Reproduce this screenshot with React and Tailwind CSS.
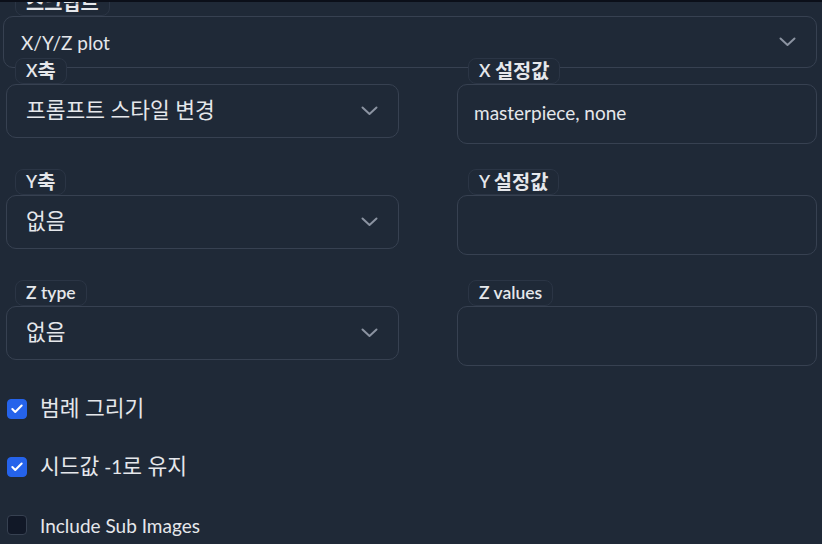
import { Check } from 'lucide-react'

const font = { fontFamily: 'Lato, "Noto Sans CJK KR", sans-serif' }

// 한글은 참고 화면에서 라틴 글자보다 크게 찍혀 있어서 따로 키움
function K({ children }) {
  return <span className="text-[1.13em]">{children}</span>
}

function Chevron() {
  return (
    <svg width="17" height="10" viewBox="0 0 17 10" fill="none" className="shrink-0">
      <polyline points="1.5,1.5 8.5,8 15.5,1.5" stroke="#8b93a1" strokeWidth="2" strokeLinecap="round" strokeLinejoin="round" />
    </svg>
  )
}

function Label({ children, className = '' }) {
  return (
    <div className={`relative z-10 self-start h-[26px] px-[10px] flex items-center rounded-lg bg-[#1f2937] border border-[#2b3545] text-[17.5px] font-semibold text-[#e5e7eb] leading-none whitespace-pre ${className}`}>
      {children}
    </div>
  )
}

function Dropdown({ label, value }) {
  return (
    <div className="flex flex-col">
      <Label className="ml-[9px]">{label}</Label>
      <div className="h-[54px] flex items-center justify-between pl-[19px] pr-[20px] rounded-[10px] border border-[#374151] text-[19px] leading-none text-[#e5e7eb]">
        <span>{value}</span>
        <Chevron />
      </div>
    </div>
  )
}

function TextBox({ label, value }) {
  return (
    <div className="flex flex-col">
      <Label className="ml-[11px]">{label}</Label>
      <div className="h-[60px] flex items-center px-[16px] pb-[3px] rounded-[10px] border border-[#374151] text-[19px] leading-none text-[#e5e7eb]">
        {value}
      </div>
    </div>
  )
}

function CheckRow({ checked, children }) {
  return (
    <div className="flex items-center gap-[13px] h-[20px]">
      <div
        className={`ml-[7px] w-[20px] h-[20px] rounded-[4px] flex items-center justify-center ${
          checked ? 'bg-[#2563eb] border border-[#2563eb]' : 'bg-[#111827] border border-[#374151]'
        }`}
      >
        {checked && <Check className="w-[14px] h-[14px] text-white" strokeWidth={3.5} />}
      </div>
      <span className="text-[19px] leading-none text-[#e5e7eb] whitespace-pre">{children}</span>
    </div>
  )
}

export default function App() {
  return (
    <div className="w-[822px] h-[544px] overflow-hidden bg-[#1f2937] border-t-2 border-[#0b0f19]" style={font}>
      {/* 스크립트 */}
      <div className="flex flex-col ml-[3px] w-[814px]">
        <Label className="ml-[12px] -mt-[12px]"><K>스크립트</K></Label>
        <div className="h-[52px] flex items-center justify-between pl-[17px] pr-[20px] rounded-[10px] border border-[#374151] text-[19px] leading-none text-[#e5e7eb]">
          <span>X/Y/Z plot</span>
          <Chevron />
        </div>
      </div>

      {/* 축 설정 */}
      <div className="-mt-[10px] pl-[6px] grid grid-cols-[393px_360px] gap-x-[58px] gap-y-[25px]">
        <Dropdown label={<>X<K>축</K></>} value={<K>프롬프트 스타일 변경</K>} />
        <TextBox label={<>X <K>설정값</K></>} value="masterpiece, none" />
        <Dropdown label={<>Y<K>축</K></>} value={<K>없음</K>} />
        <TextBox label={<>Y <K>설정값</K></>} value="" />
        <Dropdown label="Z type" value={<K>없음</K>} />
        <TextBox label="Z values" value="" />
      </div>

      {/* 체크박스 */}
      <div className="mt-[33px] flex flex-col gap-[38px]">
        <CheckRow checked><K>범례 그리기</K></CheckRow>
        <CheckRow checked><K>시드값</K> -1<K>로 유지</K></CheckRow>
        <CheckRow checked={false}>Include Sub Images</CheckRow>
      </div>
    </div>
  )
}
